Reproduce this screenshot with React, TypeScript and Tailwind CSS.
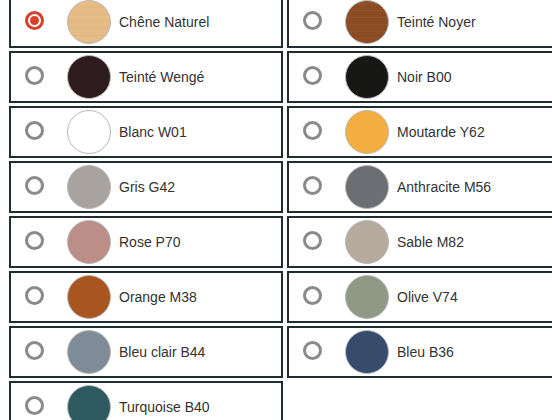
import React from 'react';

const colors = [
  { name: 'Chêne Naturel', color: '#e6bb85', wood: true, selected: true },
  { name: 'Teinté Noyer', color: '#8c4c24', wood: true },
  { name: 'Teinté Wengé', color: '#2e1b1d' },
  { name: 'Noir B00', color: '#171716' },
  { name: 'Blanc W01', color: '#ffffff' },
  { name: 'Moutarde Y62', color: '#f4ad3f' },
  { name: 'Gris G42', color: '#a9a39f' },
  { name: 'Anthracite M56', color: '#6b6e73' },
  { name: 'Rose P70', color: '#bb8e88' },
  { name: 'Sable M82', color: '#b6a99d' },
  { name: 'Orange M38', color: '#a8551f' },
  { name: 'Olive V74', color: '#8f9a86' },
  { name: 'Bleu clair B44', color: '#808b98' },
  { name: 'Bleu B36', color: '#374b6c' },
  { name: 'Turquoise B40', color: '#2f5961' },
];

const Swatch = ({ color, wood }: { color: string; wood?: boolean }) => (
  <div
    className="w-[44px] h-[44px] rounded-full shrink-0 border border-[#b8b8b8] overflow-hidden"
    style={{
      backgroundColor: color,
      backgroundImage: wood
        ? 'repeating-linear-gradient(0deg, rgba(0,0,0,0.025) 0px, rgba(0,0,0,0.025) 1px, transparent 1px, transparent 4px, rgba(255,255,255,0.04) 4px, rgba(255,255,255,0.04) 5px, transparent 5px, transparent 7px)'
        : undefined,
    }}
  />
);

const Radio = ({ selected }: { selected?: boolean }) =>
  selected ? (
    <div className="w-[19px] h-[19px] rounded-full border-[3px] border-[#d8402c] flex items-center justify-center shrink-0 mb-1">
      <div className="w-[9px] h-[9px] rounded-full bg-[#d8402c]" />
    </div>
  ) : (
    <div className="w-[19px] h-[19px] rounded-full border-[3px] border-[#8a8a8a] shrink-0 mb-1" />
  );

export default function App() {
  return (
    <div className="w-[552px] h-[420px] overflow-hidden bg-white">
      <div className="ml-[9px] mt-[-4px] w-[552px] grid grid-cols-2 gap-x-[4px] gap-y-[3px]">
        {colors.map((c, idx) => (
          <div
            key={idx}
            className="h-[52px] border-2 border-[#1e2e30] flex items-center pl-[14px]"
          >
            <Radio selected={c.selected} />
            <div className="ml-[23px]">
              <Swatch color={c.color} wood={c.wood} />
            </div>
            <span className="ml-[8px] text-[14px] text-[#333333] font-['Liberation_Sans',Arial,sans-serif]">
              {c.name}
            </span>
          </div>
        ))}
      </div>
    </div>
  );
}
